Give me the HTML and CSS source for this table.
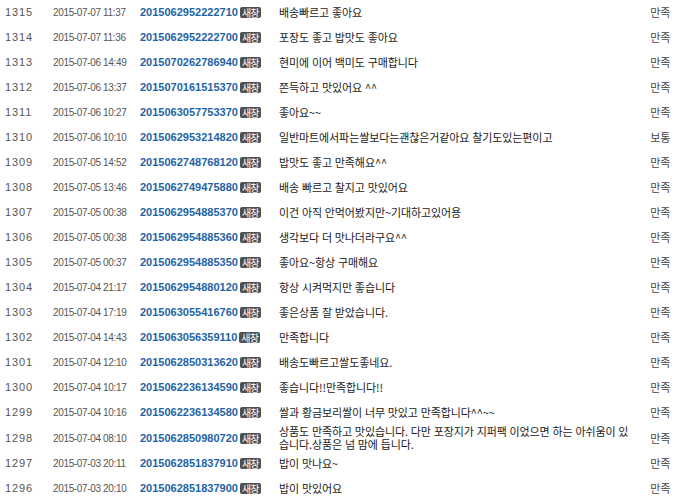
FILE: index.html
```html
<!DOCTYPE html>
<html>
    <head>
        <title>구매후기</title>
        <link rel="stylesheet" href="styles.css">
    </head>
    <body>
        <table class="review-list">
            <colgroup>
                <col class="col-no">
                <col class="col-date">
                <col class="col-order">
                <col class="col-text">
                <col class="col-rate">
            </colgroup>
            <tbody>
                <tr><td class="no">1315</td><td class="date">2015-07-07 11:37</td><td class="order"><div class="order-box"><a href="#">2015062952222710</a><span class="badge">새창</span></div></td><td class="text">배송빠르고 좋아요</td><td class="rate">만족</td></tr>
                <tr><td class="no">1314</td><td class="date">2015-07-07 11:36</td><td class="order"><div class="order-box"><a href="#">2015062952222700</a><span class="badge">새창</span></div></td><td class="text">포장도 좋고 밥맛도 좋아요</td><td class="rate">만족</td></tr>
                <tr><td class="no">1313</td><td class="date">2015-07-06 14:49</td><td class="order"><div class="order-box"><a href="#">2015070262786940</a><span class="badge">새창</span></div></td><td class="text">현미에 이어 백미도 구매합니다</td><td class="rate">만족</td></tr>
                <tr><td class="no">1312</td><td class="date">2015-07-06 13:37</td><td class="order"><div class="order-box"><a href="#">2015070161515370</a><span class="badge">새창</span></div></td><td class="text">쫀득하고 맛있어요 ^^</td><td class="rate">만족</td></tr>
                <tr><td class="no">1311</td><td class="date">2015-07-06 10:27</td><td class="order"><div class="order-box"><a href="#">2015063057753370</a><span class="badge">새창</span></div></td><td class="text">좋아요~~</td><td class="rate">만족</td></tr>
                <tr><td class="no">1310</td><td class="date">2015-07-06 10:10</td><td class="order"><div class="order-box"><a href="#">2015062953214820</a><span class="badge">새창</span></div></td><td class="text">일반마트에서파는쌀보다는괜찮은거같아요 찰기도있는편이고</td><td class="rate">보통</td></tr>
                <tr><td class="no">1309</td><td class="date">2015-07-05 14:52</td><td class="order"><div class="order-box"><a href="#">2015062748768120</a><span class="badge">새창</span></div></td><td class="text">밥맛도 좋고 만족해요^^</td><td class="rate">만족</td></tr>
                <tr><td class="no">1308</td><td class="date">2015-07-05 13:46</td><td class="order"><div class="order-box"><a href="#">2015062749475880</a><span class="badge">새창</span></div></td><td class="text">배송 빠르고 찰지고 맛있어요</td><td class="rate">만족</td></tr>
                <tr><td class="no">1307</td><td class="date">2015-07-05 00:38</td><td class="order"><div class="order-box"><a href="#">2015062954885370</a><span class="badge">새창</span></div></td><td class="text">이건 아직 안먹어봤지만~기대하고있어용</td><td class="rate">만족</td></tr>
                <tr><td class="no">1306</td><td class="date">2015-07-05 00:38</td><td class="order"><div class="order-box"><a href="#">2015062954885360</a><span class="badge">새창</span></div></td><td class="text">생각보다 더 맛나더라구요^^</td><td class="rate">만족</td></tr>
                <tr><td class="no">1305</td><td class="date">2015-07-05 00:37</td><td class="order"><div class="order-box"><a href="#">2015062954885350</a><span class="badge">새창</span></div></td><td class="text">좋아요~항상 구매해요</td><td class="rate">만족</td></tr>
                <tr><td class="no">1304</td><td class="date">2015-07-04 21:17</td><td class="order"><div class="order-box"><a href="#">2015062954880120</a><span class="badge">새창</span></div></td><td class="text">항상 시켜먹지만 좋습니다</td><td class="rate">만족</td></tr>
                <tr><td class="no">1303</td><td class="date">2015-07-04 17:19</td><td class="order"><div class="order-box"><a href="#">2015063055416760</a><span class="badge">새창</span></div></td><td class="text">좋은상품 잘 받았습니다.</td><td class="rate">만족</td></tr>
                <tr><td class="no">1302</td><td class="date">2015-07-04 14:43</td><td class="order"><div class="order-box"><a href="#">2015063056359110</a><span class="badge">새창</span></div></td><td class="text">만족합니다</td><td class="rate">만족</td></tr>
                <tr><td class="no">1301</td><td class="date">2015-07-04 12:10</td><td class="order"><div class="order-box"><a href="#">2015062850313620</a><span class="badge">새창</span></div></td><td class="text">배송도빠르고쌀도좋네요.</td><td class="rate">만족</td></tr>
                <tr><td class="no">1300</td><td class="date">2015-07-04 10:17</td><td class="order"><div class="order-box"><a href="#">2015062236134590</a><span class="badge">새창</span></div></td><td class="text">좋습니다!!만족합니다!!</td><td class="rate">만족</td></tr>
                <tr><td class="no">1299</td><td class="date">2015-07-04 10:16</td><td class="order"><div class="order-box"><a href="#">2015062236134580</a><span class="badge">새창</span></div></td><td class="text">쌀과 황금보리쌀이 너무 맛있고 만족합니다^^~~</td><td class="rate">만족</td></tr>
                <tr><td class="no">1298</td><td class="date">2015-07-04 08:10</td><td class="order"><div class="order-box"><a href="#">2015062850980720</a><span class="badge">새창</span></div></td><td class="text">상품도 만족하고 맛있습니다. 다만 포장지가 지퍼팩 이었으면 하는 아쉬움이 있<br>습니다.상품은 넘 맘에 듭니다.</td><td class="rate">만족</td></tr>
                <tr><td class="no">1297</td><td class="date">2015-07-03 20:11</td><td class="order"><div class="order-box"><a href="#">2015062851837910</a><span class="badge">새창</span></div></td><td class="text">밥이 맛나요~</td><td class="rate">만족</td></tr>
                <tr><td class="no">1296</td><td class="date">2015-07-03 20:10</td><td class="order"><div class="order-box"><a href="#">2015062851837900</a><span class="badge">새창</span></div></td><td class="text">밥이 맛있어요</td><td class="rate">만족</td></tr>
            </tbody>
        </table>
    </body>
</html>
```

FILE: styles.css
```css
body {
    margin: 0;
    padding: 0;
    background: #fff;
    font-family: 'Liberation Sans', 'Noto Sans CJK KR', sans-serif;
    color: #333;
}

.review-list {
    width: 674px;
    border-collapse: collapse;
    table-layout: fixed;
}

.col-no { width: 52px; }
.col-date { width: 88px; }
.col-order { width: 139px; }
.col-rate { width: 44px; }

.review-list td {
    height: 25px;
    padding: 0;
    line-height: 13px;
    vertical-align: middle;
    white-space: nowrap;
}

.no {
    padding-left: 5px !important;
    font-size: 11px;
    letter-spacing: 0.9px;
    color: #555;
}

.date {
    padding-left: 1px !important;
    font-size: 10px;
    letter-spacing: -0.35px;
    color: #555;
}

.order-box {
    display: flex;
    align-items: center;
    gap: 2px;
}

.order-box a {
    font-size: 11px;
    font-weight: bold;
    color: #1f63a6;
    text-decoration: none;
}

.badge {
    padding: 0 2px;
    height: 11px;
    line-height: 11px;
    font-family: 'Noto Sans CJK KR', sans-serif;
    font-size: 10px;
    letter-spacing: -0.8px;
    color: #fff;
    background: #505050;
    border-radius: 2px;
}

.text {
    font-family: 'Noto Sans CJK KR', sans-serif;
    font-size: 11px;
    letter-spacing: -0.1px;
    word-spacing: 0.5px;
    color: #1a1a1a;
}

.rate {
    padding-right: 4px !important;
    text-align: right;
    font-family: 'Noto Sans CJK KR', sans-serif;
    font-size: 11px;
    letter-spacing: -0.3px;
    color: #444;
}
```
